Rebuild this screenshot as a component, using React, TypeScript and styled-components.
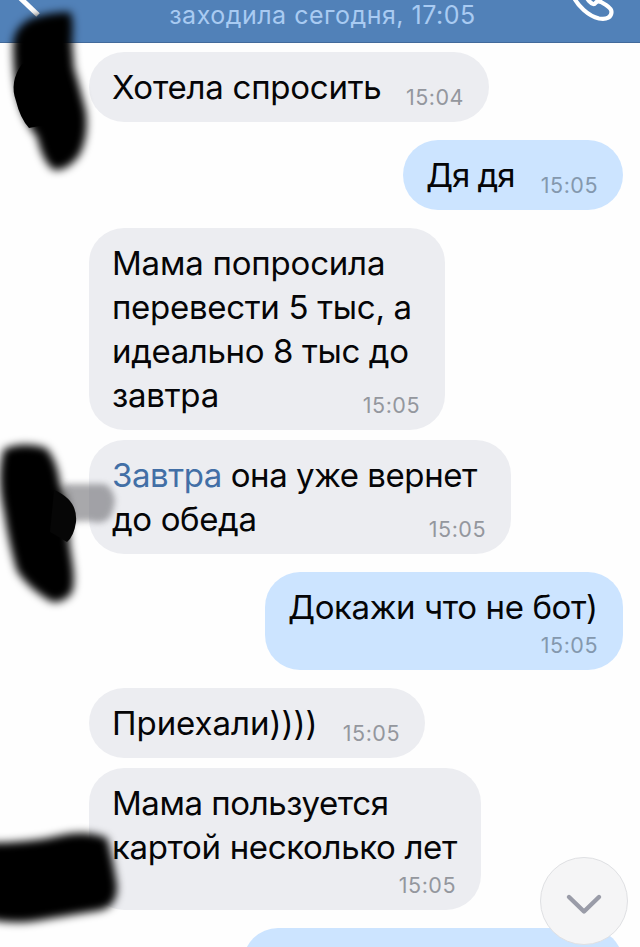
import React from "react";
import styled, { createGlobalStyle } from "styled-components";

const GlobalStyle = createGlobalStyle`
  * { box-sizing: border-box; }
  html, body { margin: 0; padding: 0; background: #fefefe; }
  body { overflow: hidden; font-family: Inter, "Open Sans", sans-serif; }
`;

const Screen = styled.main`
  position: relative;
  width: 640px;
  height: 947px;
  overflow: hidden;
  display: flex;
  flex-direction: column;
  background: #fefefe;
`;

const Header = styled.header`
  flex: none;
  height: 43px;
  display: flex;
  align-items: flex-start;
  justify-content: space-between;
  background: #5181b8;
  border-bottom: 1px solid #426a9b;
`;

const HeaderIcon = styled.svg`
  flex: none;
  display: block;
  width: 80px;
  height: 42px;
`;

const Status = styled.span`
  padding-left: 5px;
  line-height: 31px;
  font-size: 25px;
  letter-spacing: 0.5px;
  color: #a9cbf2;
  white-space: nowrap;
`;

const Messages = styled.section`
  display: flex;
  flex-direction: column;
  padding: 9px 17px 0 89px;
`;

const Bubble = styled.article<{ $own?: boolean; $width: number; $gap: number; $stacked?: boolean }>`
  flex: none;
  align-self: ${(p) => (p.$own ? "flex-end" : "flex-start")};
  width: ${(p) => p.$width}px;
  margin-bottom: ${(p) => p.$gap}px;
  padding: 13px 25px 13px 23px;
  border-radius: 35px;
  background: ${(p) => (p.$own ? "#cce4ff" : "#ecedf1")};
  display: flex;
  flex-direction: ${(p) => (p.$stacked ? "column" : "row")};
  justify-content: space-between;
  align-items: flex-end;
`;

const Text = styled.div<{ $stacked?: boolean }>`
  align-self: ${(p) => (p.$stacked ? "flex-start" : "auto")};
  width: ${(p) => (p.$stacked ? "auto" : "0")};
  font-size: 33px;
  line-height: 44px;
  color: #050507;
`;

const Line = styled.div<{ $spacing: number }>`
  white-space: nowrap;
  letter-spacing: ${(p) => p.$spacing}px;
`;

const Highlight = styled.span`
  color: #426fa6;
`;

const Time = styled.time<{ $own?: boolean; $stacked?: boolean }>`
  flex: none;
  font-size: 21.5px;
  line-height: ${(p) => (p.$stacked ? "32px" : "28px")};
  height: 28px;
  letter-spacing: 0.5px;
  color: ${(p) => (p.$own ? "#8498ae" : "#94979e")};
  margin-bottom: ${(p) => (p.$stacked ? "0" : "-2px")};
`;

const ScrollButton = styled.button`
  position: absolute;
  left: 540px;
  top: 857px;
  width: 88px;
  height: 88px;
  padding: 0;
  display: grid;
  place-items: center;
  border: 1px solid #dfe0e3;
  border-radius: 50%;
  background: #f5f5f6;
`;

const Scribbles = styled.svg`
  position: absolute;
  inset: 0;
  pointer-events: none;
`;

type LineData = { text: string; spacing: number; highlight?: string };
type Message = { own?: boolean; width: number; gap: number; stacked?: boolean; time: string; lines: LineData[] };

const messages: Message[] = [
  { width: 400, gap: 18, time: "15:04", lines: [{ text: "Хотела спросить", spacing: -0.24 }] },
  { own: true, width: 220, gap: 18, time: "15:05", lines: [{ text: "Дя дя", spacing: -1 }] },
  {
    width: 356, gap: 10, time: "15:05",
    lines: [
      { text: "Мама попросила", spacing: -0.2 },
      { text: "перевести 5 тыс, а", spacing: -0.3 },
      { text: "идеально 8 тыс до", spacing: -0.37 },
      { text: "завтра", spacing: -0.25 },
    ],
  },
  {
    width: 422, gap: 18, time: "15:05",
    lines: [
      { highlight: "Завтра", text: " она уже вернет", spacing: -0.44 },
      { text: "до обеда", spacing: -0.38 },
    ],
  },
  { own: true, width: 358, gap: 18, stacked: true, time: "15:05", lines: [{ text: "Докажи что не бот)", spacing: -0.38 }] },
  { width: 336, gap: 10, time: "15:05", lines: [{ text: "Приехали))))", spacing: -0.04 }] },
  {
    width: 392, gap: 18, stacked: true, time: "15:05",
    lines: [
      { text: "Мама пользуется", spacing: -0.44 },
      { text: "картой несколько лет", spacing: -0.34 },
    ],
  },
  { own: true, width: 380, gap: 0, time: "", lines: [{ text: "", spacing: 0 }] },
];

export default function App() {
  return (
    <>
      <GlobalStyle />
      <Screen>
        <Header>
          <HeaderIcon viewBox="0 0 80 42" fill="none" stroke="#fff" strokeWidth="5">
            <path d="M16 -6 L38 15" />
          </HeaderIcon>
          <Status>заходила сегодня, 17:05</Status>
          <HeaderIcon viewBox="560 0 80 42" fill="none" stroke="#fff" strokeWidth="4.2" strokeLinejoin="round">
            <path d="M573 -4 C578 6 588 16 599 18.5 C607 20 611.5 17 611.5 12 C611.5 9 609 7 606 5 L601 2 C599 1 597 1 595.5 3 C594 5 592 4 589 1 L586 -3" />
          </HeaderIcon>
        </Header>
        <Messages>
          {messages.map((m, i) => (
            <Bubble key={i} $own={m.own} $width={m.width} $gap={m.gap} $stacked={m.stacked}>
              <Text $stacked={m.stacked}>
                {m.lines.map((l, j) => (
                  <Line key={j} $spacing={l.spacing}>
                    {l.highlight && <Highlight>{l.highlight}</Highlight>}
                    {l.text || "\u00a0"}
                  </Line>
                ))}
              </Text>
              {m.time && <Time $own={m.own} $stacked={m.stacked}>{m.time}</Time>}
            </Bubble>
          ))}
        </Messages>
        <Scribbles width="640" height="947" viewBox="0 0 640 947">
          <defs>
            <filter id="soft" x="-30%" y="-30%" width="160%" height="160%">
              <feGaussianBlur stdDeviation="4.5" />
            </filter>
            <filter id="faint" x="-30%" y="-30%" width="160%" height="160%">
              <feGaussianBlur stdDeviation="3" />
            </filter>
          </defs>
          <path d="M64 484 H104 Q112 486 115 500 Q113 518 105 521 Q98 524 90 521 L68 522Z" fill="#707074" opacity=".6" filter="url(#faint)" />
          <g filter="url(#soft)">
            <path d="M30 19 Q48 12 70 12 Q74 18 72 42 L74 68 Q80 88 86 112 Q89 135 80 154 Q68 171 54 170 Q43 163 37 137 Q24 122 18 98 Q13 75 13 44 Q14 28 30 19Z" />
            <path d="M4 449 Q24 441 46 448 Q57 460 60 484 Q69 500 69 520 Q68 540 72 560 Q76 585 71 594 Q60 605 50 601 Q28 588 17 571 Q9 545 4 512 Q-4 475 4 449Z" />
            <path d="M-20 843 Q30 843 58 836 Q84 829 107 838 Q112 855 117 885 Q118 905 102 910 Q60 917 35 921 Q10 925 -20 917Z" />
          </g>
          <path d="M54 490 Q78 500 76 522 Q74 536 67 542 L50 532Z" fill="#060606" />
          <path d="M22 64 Q9 82 16 101 Q20 118 29 128 L60 122 L72 98 L62 66Z" />
        </Scribbles>
        <ScrollButton aria-label="Вниз">
          <svg width="40" height="30" viewBox="0 0 40 30" fill="none" stroke="#9a9ca8" strokeWidth="4.4" strokeLinecap="round" strokeLinejoin="round">
            <path d="M5 11 L20 25.5 L35 11" />
          </svg>
        </ScrollButton>
      </Screen>
    </>
  );
}
